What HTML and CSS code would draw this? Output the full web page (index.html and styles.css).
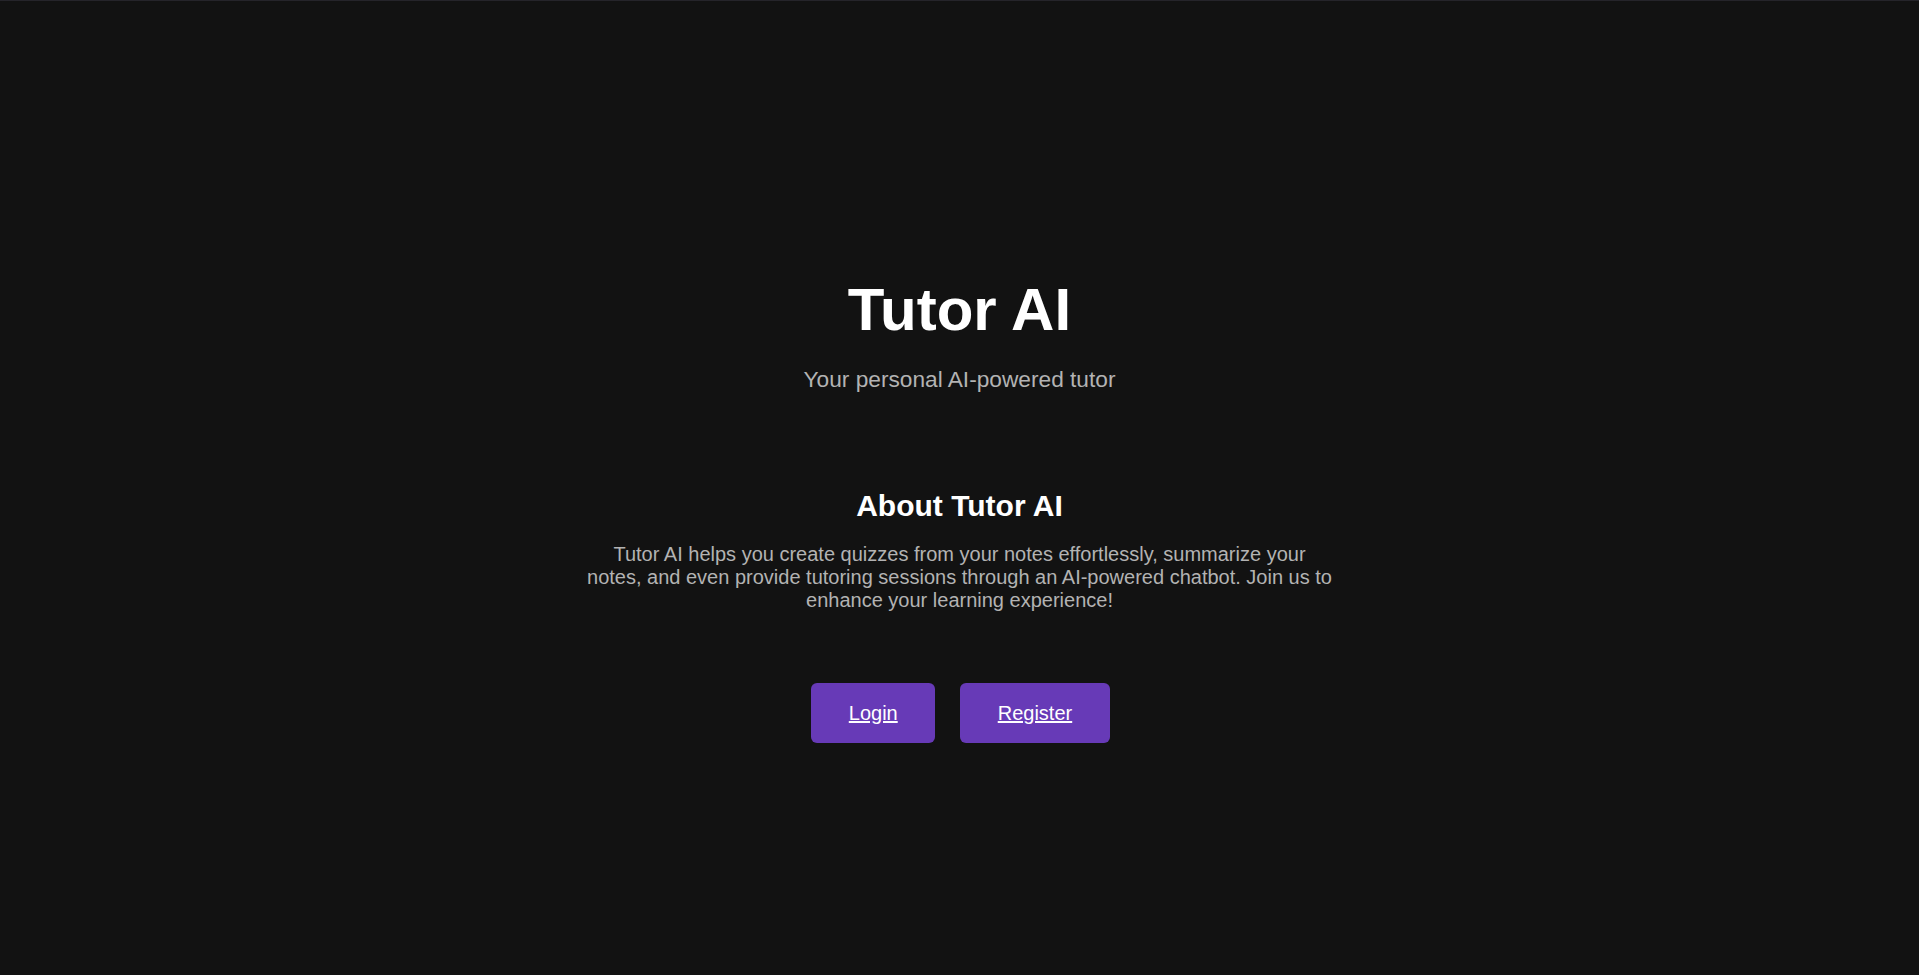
FILE: index.html
```html
<!DOCTYPE html>
<html lang="en">
<head>
<meta charset="utf-8">
<title>Tutor AI</title>
<link rel="stylesheet" href="styles.css">
</head>
<body>
<main class="page">
  <header class="hero">
    <h1 class="hero-title">Tutor AI</h1>
    <p class="hero-subtitle">Your personal AI-powered tutor</p>
  </header>
  <section class="about">
    <h2 class="about-title">About Tutor AI</h2>
    <p class="about-text">Tutor AI helps you create quizzes from your notes effortlessly, summarize your notes, and even provide tutoring sessions through an AI-powered chatbot. Join us to enhance your learning experience!</p>
  </section>
  <nav class="actions">
    <a class="btn" href="#login">Login</a>
    <a class="btn" href="#register">Register</a>
  </nav>
</main>
</body>
</html>
```

FILE: styles.css
```css
html, body {
  margin: 0;
  padding: 0;
}
body {
  background: #121212;
  color: #ffffff;
  font-family: "Liberation Sans", Arial, sans-serif;
  min-height: 975px;
  box-sizing: border-box;
  border-top: 1px solid #25242a;
}
.page {
  display: flex;
  flex-direction: column;
  align-items: center;
  padding-top: 274px;
  text-align: center;
}
.hero-title {
  margin: 0;
  font-size: 60px;
  font-weight: 700;
  line-height: normal;
  color: #ffffff;
}
.hero-subtitle {
  margin: 22px 0 0;
  font-size: 22.7px;
  line-height: normal;
  color: #b3b3b3;
}
.about {
  margin-top: 96px;
  display: flex;
  flex-direction: column;
  align-items: center;
}
.about-title {
  margin: 0;
  font-size: 30px;
  font-weight: 700;
  line-height: normal;
  color: #ffffff;
}
.about-text {
  margin: 20px 0 0;
  max-width: 750px;
  font-size: 20px;
  line-height: normal;
  color: #b3b3b3;
}
.actions {
  margin-top: 71px;
  display: flex;
  gap: 25px;
  padding-left: 2px;
}
.btn {
  display: block;
  padding: 18px 37.5px;
  font-size: 20px;
  line-height: 24px;
  background: #673ab7;
  color: #ffffff;
  text-decoration: underline;
  border-radius: 6px;
}
```
